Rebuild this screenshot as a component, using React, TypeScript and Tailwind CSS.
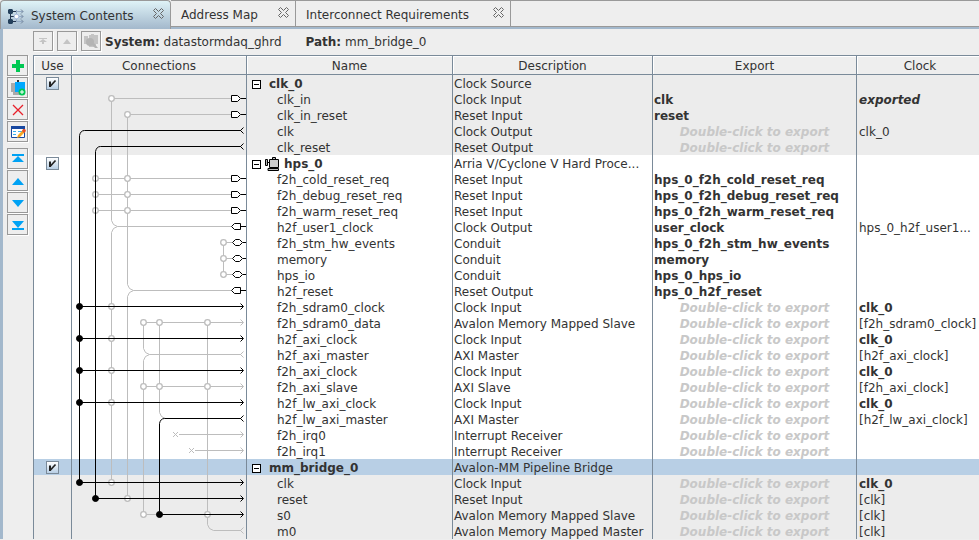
import { useState } from "react";
import type { ReactNode } from "react";

type Row = {
  name: string;
  description: string;
  exported?: string;
  clock?: string;
  clockStyle?: string;
  root?: boolean;
  board?: boolean;
  tone: string;
};

const HINT = "Double-click to export";
const GRAY = "bg-[#ececec]";
const WHITE = "bg-white";

const rows: Row[] = [
  { name: "clk_0", description: "Clock Source", root: true, tone: GRAY },
  { name: "clk_in", description: "Clock Input", exported: "clk", clock: "exported", clockStyle: "font-bold italic", tone: GRAY },
  { name: "clk_in_reset", description: "Reset Input", exported: "reset", tone: GRAY },
  { name: "clk", description: "Clock Output", exported: HINT, clock: "clk_0", tone: GRAY },
  { name: "clk_reset", description: "Reset Output", exported: HINT, tone: GRAY },
  { name: "hps_0", description: "Arria V/Cyclone V Hard Proce...", root: true, board: true, tone: WHITE },
  { name: "f2h_cold_reset_req", description: "Reset Input", exported: "hps_0_f2h_cold_reset_req", tone: WHITE },
  { name: "f2h_debug_reset_req", description: "Reset Input", exported: "hps_0_f2h_debug_reset_req", tone: WHITE },
  { name: "f2h_warm_reset_req", description: "Reset Input", exported: "hps_0_f2h_warm_reset_req", tone: WHITE },
  { name: "h2f_user1_clock", description: "Clock Output", exported: "user_clock", clock: "hps_0_h2f_user1...", tone: WHITE },
  { name: "f2h_stm_hw_events", description: "Conduit", exported: "hps_0_f2h_stm_hw_events", tone: WHITE },
  { name: "memory", description: "Conduit", exported: "memory", tone: WHITE },
  { name: "hps_io", description: "Conduit", exported: "hps_0_hps_io", tone: WHITE },
  { name: "h2f_reset", description: "Reset Output", exported: "hps_0_h2f_reset", tone: WHITE },
  { name: "f2h_sdram0_clock", description: "Clock Input", exported: HINT, clock: "clk_0", clockStyle: "font-bold", tone: WHITE },
  { name: "f2h_sdram0_data", description: "Avalon Memory Mapped Slave", exported: HINT, clock: "[f2h_sdram0_clock]", tone: WHITE },
  { name: "h2f_axi_clock", description: "Clock Input", exported: HINT, clock: "clk_0", clockStyle: "font-bold", tone: WHITE },
  { name: "h2f_axi_master", description: "AXI Master", exported: HINT, clock: "[h2f_axi_clock]", tone: WHITE },
  { name: "f2h_axi_clock", description: "Clock Input", exported: HINT, clock: "clk_0", clockStyle: "font-bold", tone: WHITE },
  { name: "f2h_axi_slave", description: "AXI Slave", exported: HINT, clock: "[f2h_axi_clock]", tone: WHITE },
  { name: "h2f_lw_axi_clock", description: "Clock Input", exported: HINT, clock: "clk_0", clockStyle: "font-bold", tone: WHITE },
  { name: "h2f_lw_axi_master", description: "AXI Master", exported: HINT, clock: "[h2f_lw_axi_clock]", tone: WHITE },
  { name: "f2h_irq0", description: "Interrupt Receiver", exported: HINT, tone: WHITE },
  { name: "f2h_irq1", description: "Interrupt Receiver", exported: HINT, tone: WHITE },
  { name: "mm_bridge_0", description: "Avalon-MM Pipeline Bridge", root: true, tone: "bg-[#b8cfe5]" },
  { name: "clk", description: "Clock Input", exported: HINT, clock: "clk_0", clockStyle: "font-bold", tone: GRAY },
  { name: "reset", description: "Reset Input", exported: HINT, clock: "[clk]", tone: GRAY },
  { name: "s0", description: "Avalon Memory Mapped Slave", exported: HINT, clock: "[clk]", tone: GRAY },
  { name: "m0", description: "Avalon Memory Mapped Master", exported: HINT, clock: "[clk]", tone: GRAY },
];

/* Vertical centre of a row in the wiring diagram. */
const mid = (row: number) => 7.5 + 16 * row;

/* Horizontal position of each vertical bus, left to right. */
const bus = [7.5, 23.5, 39.5, 55.5, 71.5, 87.5, 103.5, 119.5, 135.5, 151.5];

const grayPaths = [
  `M159 ${mid(1)}H${bus[2]}V${mid(9) - 6}q1 5 6 6H159`,
  `M${bus[2] + 6} ${mid(9)}q-5 1-6 6V${mid(25)}`,
  `M159 ${mid(2)}H${bus[3]}V${mid(13) - 6}q1 5 6 6H159`,
  `M${bus[3] + 6} ${mid(13)}q-5 1-6 6V${mid(26)}`,
  `M${bus[1]} ${mid(6)}H159M${bus[1]} ${mid(7)}H159M${bus[1]} ${mid(8)}H159`,
  `M160 ${mid(10)}H${bus[9]}V${mid(12)}H160M${bus[9]} ${mid(11)}H160`,
  `M171 ${mid(15)}H${bus[4]}V${mid(17) - 6}q1 5 6 6H169`,
  `M${bus[4] + 6} ${mid(17)}q-5 1-6 6V${mid(27)}H${bus[5]}`,
  `M${bus[4]} ${mid(19)}H171`,
  `M${bus[5]} ${mid(15)}V${mid(21) - 6}q1 5 6 6`,
  `M${bus[8]} ${mid(15)}V${mid(28) - 6}q1 5 6 6H169`,
  `M107 ${mid(22)}H171M123 ${mid(23)}H171`,
  `M101 ${mid(22) - 2.5}l5 5m0-5l-5 5M117 ${mid(23) - 2.5}l5 5m0-5l-5 5`,
];

const openNodes: [number, number][] = [
  [2, 1], [3, 2],
  [1, 6], [3, 6], [1, 7], [3, 7], [1, 8], [3, 8],
  [9, 10], [9, 11], [9, 12],
  [2, 14], [2, 16], [2, 18], [2, 20],
  [4, 15], [5, 15], [8, 15],
  [4, 19], [5, 19], [8, 19],
  [2, 25], [3, 26], [4, 27], [8, 27],
];

const closedNodes: [number, number][] = [
  [0, 14], [0, 16], [0, 18], [0, 20], [0, 25], [1, 26], [5, 27],
];

const blackPaths = [
  `M169 ${mid(3)}H${bus[0] + 5}q-4 0-5 5V${mid(25)}H171`,
  `M169 ${mid(4)}H${bus[1] + 5}q-4 0-5 5V${mid(26)}H171`,
  `M${bus[0]} ${mid(14)}H171M${bus[0]} ${mid(16)}H171M${bus[0]} ${mid(18)}H171M${bus[0]} ${mid(20)}H171`,
  `M169 ${mid(21)}H${bus[5] + 5}q-4 0-5 5V${mid(27)}H171`,
];

const arrowIn = (row: number) => `M168.5 ${mid(row) - 3}l3 3l-3 3`;
const arrowOut = (row: number) => `M171.5 ${mid(row) - 3}l-3 3l3 3`;
const portIn = (row: number) => `M159.5 ${mid(row) - 3}h6l3 3l-3 3h-6zM169 ${mid(row)}h6`;
const portOut = (row: number) => `M168.5 ${mid(row) - 3}h-6l-3 3l3 3h6zM169 ${mid(row)}h6`;
const portBoth = (row: number) => `M163.5 ${mid(row) - 3}h4l3 3l-3 3h-4l-3-3zM171 ${mid(row)}h4`;

function Wiring() {
  return (
    <svg className="pointer-events-none absolute top-0 left-0" width="175" height="464" viewBox="0 0 175 464" fill="none" aria-hidden="true">
      <g stroke="#bdbdbd">
        {grayPaths.map((d) => <path key={d} d={d} />)}
        {[15, 19, 22, 23].map((r) => <path key={r} d={arrowIn(r)} />)}
        {[17, 28].map((r) => <path key={r} d={arrowOut(r)} />)}
        {openNodes.map(([b, r]) => (
          <circle key={`${b}-${r}`} cx={bus[b]} cy={mid(r)} r="2.8" fill="#fff" strokeWidth="1.3" />
        ))}
      </g>
      <g stroke="#000">
        {blackPaths.map((d) => <path key={d} d={d} />)}
        {[14, 16, 18, 20, 25, 26, 27].map((r) => <path key={r} d={arrowIn(r)} />)}
        {[3, 4, 21].map((r) => <path key={r} d={arrowOut(r)} />)}
        <g fill="#fff">
          {[1, 2, 6, 7, 8].map((r) => <path key={r} d={portIn(r)} />)}
          {[9, 13].map((r) => <path key={r} d={portOut(r)} />)}
          {[10, 11, 12].map((r) => <path key={r} d={portBoth(r)} />)}
        </g>
        {closedNodes.map(([b, r]) => (
          <circle key={`${b}-${r}`} cx={bus[b]} cy={mid(r)} r="3" fill="#000" />
        ))}
      </g>
    </svg>
  );
}

function SchematicIcon() {
  return (
    <svg width="18" height="16" viewBox="0 0 18 16" fill="none" aria-hidden="true">
      <path d="M3.500 2v12M3 3.500h6M3 8.500h5M3 13.500h6" stroke="#24364f" />
      <path d="M9 3.500h7M9 8.500h7M9 13.500h7M9.500 2v12" stroke="#93a9c4" />
      <path d="M14 1.500l2 2l-2 2M14 6.500l2 2l-2 2M14 11.500l2 2l-2 2" stroke="#6f8298" />
      <path d="M2 1h3l1 1v3l-1 1H2L1 5V2zM2 11h3l1 1v3l-1 1H2l-1-1v-3z" fill="#24405c" />
      <circle cx="9.500" cy="8.500" r="2.300" fill="#fff" stroke="#a9bde0" />
    </svg>
  );
}

function CloseIcon() {
  return (
    <svg width="11" height="11" viewBox="0 0 11 11" fill="none" stroke="#666" aria-hidden="true">
      <path d="M2.500 .5L5.500 3.500L8.500 .5L10.500 2.500L7.500 5.500L10.500 8.500L8.500 10.500L5.500 7.500L2.500 10.500L.5 8.500L3.500 5.500L.5 2.500Z" />
    </svg>
  );
}

function Tab({ label, width, selected, icon }: { label: string; width: string; selected?: boolean; icon?: ReactNode }) {
  return (
    <div
      className={`flex items-center justify-between border-t border-r border-[#999] pr-1.5 ${width} ${
        selected
          ? "relative -mb-0.5 h-[29px] rounded-t-sm border-l bg-linear-to-b from-[#dff3f7] to-[#a3b8cc] pl-1.5"
          : "h-[27px] border-b bg-[#eeeeee] pl-2.5"
      }`}
    >
      <button type="button" role="tab" aria-selected={!!selected} className="flex items-center gap-1.5 pt-0.5 whitespace-nowrap">
        {icon}
        {label}
      </button>
      <button type="button" aria-label={`Close ${label}`} className={selected ? "mb-1" : "mb-0.5"}>
        <CloseIcon />
      </button>
    </div>
  );
}

function ToolButton({ label, small, children }: { label: string; small?: boolean; children: ReactNode }) {
  return (
    <button
      type="button"
      aria-label={label}
      className={`flex items-center justify-center border border-[#999] shadow-[1px_1px_0_#fff] ${small ? "size-5" : "h-[21px] w-[21px]"}`}
    >
      {children}
    </button>
  );
}

function Arrow({ kind }: { kind: "top" | "up" | "down" | "bottom" }) {
  const shapes = {
    top: "M2 3h12v2H2zM8 5l6 6H2z",
    up: "M8 5l6 7H2z",
    down: "M2 5h12l-6 7z",
    bottom: "M2 4h12l-6 7zM2 11h12v2H2z",
  };
  return (
    <svg width="16" height="16" viewBox="0 0 16 16" fill="#00a2f4" aria-hidden="true">
      <path d={shapes[kind]} />
    </svg>
  );
}

function BoardIcon() {
  return (
    <svg width="15" height="15" viewBox="0 0 15 15" fill="#bbb" stroke="#000" aria-hidden="true">
      <path d="M.5 2.500h2v6h-2zM7.500 .5h3v2h-3z" />
      <path d="M4.500 2.500h9v8h-9z" fill="#ccc" />
      <path d="M3 11.500h10.500v2H3zM8 10.500v1M2.500 5.500h2" />
    </svg>
  );
}

function UseBox({ name }: { name: string }) {
  return (
    <label className="relative mx-auto block size-[13px]">
      <input
        type="checkbox"
        defaultChecked
        aria-label={`Use ${name}`}
        className="peer block size-[13px] appearance-none border border-[#7a8a99] bg-linear-to-b from-white to-[#b8cfe5]"
      />
      <svg className="pointer-events-none absolute inset-0 hidden peer-checked:block" width="13" height="13" viewBox="0 0 13 13" fill="none" stroke="#222" aria-hidden="true">
        <path d="M4 4.500v5.500" strokeWidth="2" />
        <path d="M4.500 9L9.500 3.500" strokeWidth="1.700" />
      </svg>
    </label>
  );
}

const head = "h-5 border-y border-r border-[#7a8a99] px-0 pt-0.5 pb-0 text-center font-normal shadow-[inset_1px_1px_0_#fff]";
const cell = "h-4 border-r border-[#7a8a99] pt-0.5 pb-0 pr-0 align-top leading-[14px] whitespace-nowrap";

export default function App() {
  const [selected, setSelected] = useState("mm_bridge_0");

  return (
    <div className="min-h-screen overflow-hidden bg-[#eeeeee] font-['DejaVu_Sans',sans-serif] text-[12px] leading-4 text-[#333]">
      <div className="flex items-start border-b-2 border-[#a3b8cc]" role="tablist">
        <Tab label="System Contents" width="w-[171px]" selected icon={<SchematicIcon />} />
        <Tab label="Address Map" width="w-[125px]" />
        <Tab label="Interconnect Requirements" width="w-[215px]" />
        <div className="h-[27px] flex-1 border-y border-[#999]" />
      </div>

      <div className="border-l-[3px] border-[#a3b8cc]">
        <div className="mb-0.5 flex h-6 items-center gap-1 pl-[30px] whitespace-nowrap">
          <ToolButton label="Go to top" small>
            <svg width="10" height="8" viewBox="0 0 10 8" fill="#c4c4c4" aria-hidden="true"><path d="M1 1h8v1H1zM5 2l4 3H6v2H4V5H1z" /></svg>
          </ToolButton>
          <ToolButton label="Go up" small>
            <svg width="10" height="8" viewBox="0 0 10 8" fill="#c4c4c4" aria-hidden="true"><path d="M5 2l4 5H1z" /></svg>
          </ToolButton>
          <ToolButton label="Drill into subsystem" small>
            <svg width="16" height="16" viewBox="0 0 16 16" fill="#c4c4c4" aria-hidden="true">
              <path d="M1 3h4v8H1zM6 2h2V1h3v1h4v9h-2v3H6z" />
              <circle cx="7" cy="9" r="4" fill="#b4b4b4" />
              <path d="M9 12l2-2 4 5h-3z" fill="#b4b4b4" />
            </svg>
          </ToolButton>
          <p className="pt-0.5"><strong>System:</strong> datastormdaq_ghrd</p>
          <p className="ml-5 pt-0.5"><strong>Path:</strong> mm_bridge_0</p>
        </div>

        <div className="flex items-start gap-[5px] pl-1">
          <div className="flex flex-col gap-px">
            <ToolButton label="Add component">
              <svg width="16" height="16" viewBox="0 0 16 16" fill="#00c853" aria-hidden="true"><path d="M6 2h4v4h4v4h-4v4H6v-4H2V6h4z" /></svg>
            </ToolButton>
            <ToolButton label="Add subsystem">
              <svg width="16" height="16" viewBox="0 0 16 16" aria-hidden="true">
                <path d="M1 3h4v9H1zM3 12h7v3H3z" fill="#aaa" />
                <path d="M5 2h10v10H5z" fill="#00a8ff" />
                <path d="M7 2V0h2v2z" fill="#333" />
                <circle cx="12" cy="12" r="3.500" fill="#00c853" />
                <path d="M12 10v4M10 12h4" stroke="#fff" />
              </svg>
            </ToolButton>
            <ToolButton label="Remove">
              <svg width="16" height="16" viewBox="0 0 16 16" stroke="#e8202a" strokeWidth="1.300" aria-hidden="true"><path d="M3 3l10 10M13 3L3 13" /></svg>
            </ToolButton>
            <ToolButton label="Edit">
              <svg width="16" height="16" viewBox="0 0 16 16" fill="none" aria-hidden="true">
                <path d="M1.500 2.500h13v11h-13z" fill="#fff" stroke="#1848a0" />
                <path d="M1 2h14v3H1z" fill="#1848a0" />
                <path d="M3 7.500h3M8 7.500h4M3 10.500h3" stroke="#39b0ee" />
                <path d="M7 14l1-3 5-5 2 2-5 5z" fill="#f5a623" />
                <path d="M12 7l1-2h2l1 2-2 2z" fill="#e8502a" />
              </svg>
            </ToolButton>
            <div className="mt-[5px] flex flex-col gap-px">
              <ToolButton label="Move to top"><Arrow kind="top" /></ToolButton>
              <ToolButton label="Move up"><Arrow kind="up" /></ToolButton>
              <ToolButton label="Move down"><Arrow kind="down" /></ToolButton>
              <ToolButton label="Move to bottom"><Arrow kind="bottom" /></ToolButton>
            </div>
          </div>

          <div className="min-w-0 flex-1 border-l border-[#7a8a99]">
            <table className="w-full table-fixed border-separate border-spacing-0">
              <colgroup>
                <col className="w-[38px]" />
                <col className="w-[175px]" />
                <col className="w-[206px]" />
                <col className="w-[200px]" />
                <col className="w-[204px]" />
                <col />
              </colgroup>
              <thead>
                <tr>
                  <th className={head}>Use</th>
                  <th className={head}>Connections</th>
                  <th className={head}>Name</th>
                  <th className={head}>Description</th>
                  <th className={head}>Export</th>
                  <th className={`${head} border-r-0 pl-1`}>Clock</th>
                </tr>
              </thead>
              <tbody>
                {rows.map((row, i) => (
                  <tr
                    key={i}
                    className={row.tone}
                    aria-selected={row.name === selected}
                    onClick={() => setSelected(row.name)}
                  >
                    <td className={`${cell} pl-0`}>{row.root && <UseBox name={row.name} />}</td>
                    <td className={`${cell} relative pl-0`}>{i === 0 && <Wiring />}</td>
                    <td className={`${cell} pl-0`}>
                      {row.root ? (
                        <div className="flex h-[14px] items-center pl-[5px] font-bold">
                          <button type="button" aria-label={`Collapse ${row.name}`} className="flex size-[9px] items-center justify-center border border-black bg-white">
                            <span className="h-px w-[5px] bg-black" />
                          </button>
                          {row.board && <span className="ml-1"><BoardIcon /></span>}
                          <span className={row.board ? "ml-1" : "ml-2"}>{row.name}</span>
                        </div>
                      ) : (
                        <div className="pl-[30px]">{row.name}</div>
                      )}
                    </td>
                    <td className={`${cell} pl-px`}>{row.description}</td>
                    <td className={`${cell} font-bold ${row.exported === HINT ? "pl-0 text-center text-[#c8c8c8] italic" : "pl-px"}`}>
                      {row.exported}
                    </td>
                    <td className={`${cell} border-r-0 pl-0.5 ${row.clockStyle ?? ""}`}>{row.clock}</td>
                  </tr>
                ))}
              </tbody>
            </table>
          </div>
        </div>
      </div>
    </div>
  );
}
